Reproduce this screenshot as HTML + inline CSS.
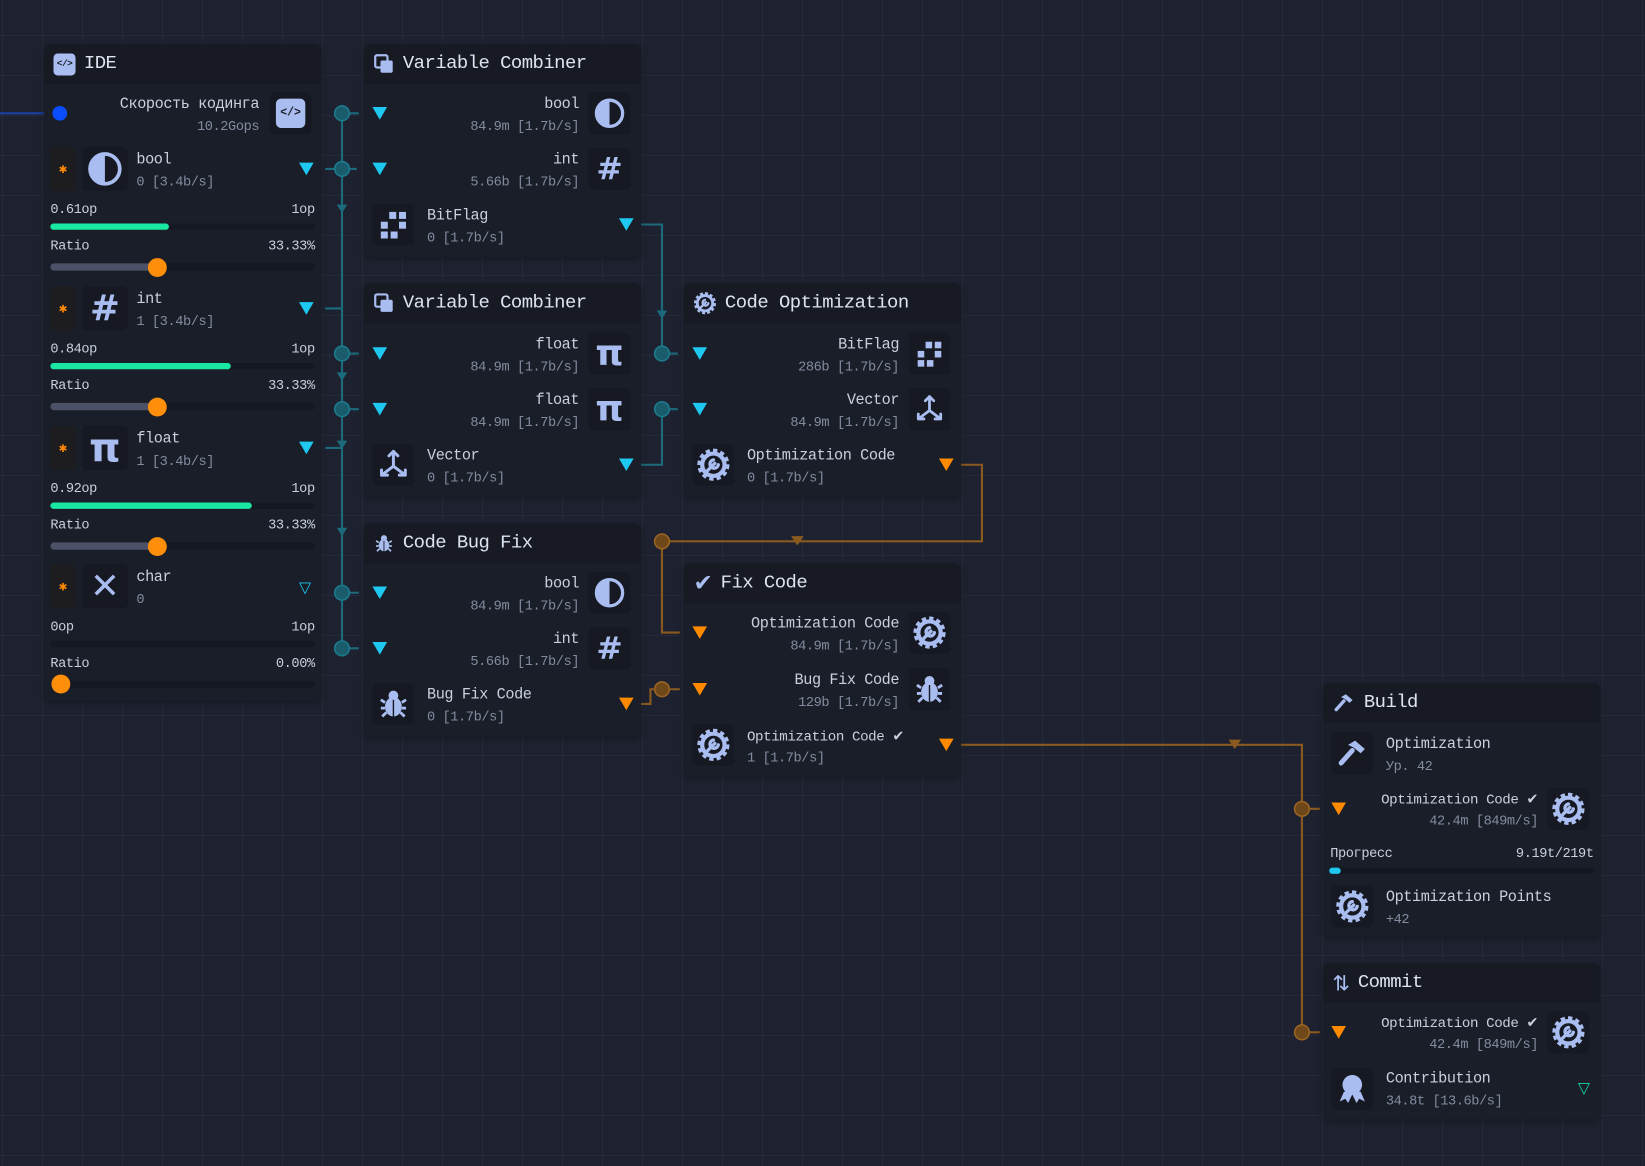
<!DOCTYPE html>
<html><head><meta charset="utf-8"><style>
html,body{margin:0;padding:0;width:1645px;height:1166px;overflow:hidden;background:#1e2230;}
body{background-color:#1e2230;background-image:linear-gradient(#252a38 1px,transparent 1px),linear-gradient(90deg,#252a38 1px,transparent 1px);background-size:40px 40px;background-position:2px -5px;}
#w{position:absolute;left:0;top:0;width:1568px;height:1111px;transform:scale(1.0491);transform-origin:0 0;font-family:"Liberation Mono","DejaVu Sans Mono",monospace;}
.node{position:absolute;width:264px;background:#1a1e28;border-radius:6px;box-shadow:0 2px 6px rgba(0,0,0,.3);}
.hdr{height:38px;background:#171a23;border-radius:6px 6px 0 0;display:flex;align-items:center;padding-left:9px;font-size:18px;color:#dde3f0;letter-spacing:-0.5px;}
.hdr svg{margin-right:8px}
.l{position:absolute;font-size:14.5px;color:#c9cfde;white-space:nowrap;line-height:16px;letter-spacing:-0.4px}
.s{position:absolute;font-size:13px;color:#838b9f;white-space:nowrap;line-height:16px;letter-spacing:-0.4px}
.r{text-align:right;right:59px}
.ib{position:absolute;width:40px;height:40px;background:#161922;border-radius:5px;display:flex;align-items:center;justify-content:center;color:#a9bdf0}
.tc{position:absolute;width:0;height:0;border-left:7px solid transparent;border-right:7px solid transparent;border-top:12px solid #1ec8f0}
.to{position:absolute;width:0;height:0;border-left:7px solid transparent;border-right:7px solid transparent;border-top:12px solid #ff8a00}
.big{font-size:34px;color:#a9bdf0;font-family:"DejaVu Sans",sans-serif;font-weight:bold}
.gb{position:absolute;left:6px;width:24px;height:42px;background:#1d1d20;border-radius:4px;color:#ff8a00;font-size:13px;display:flex;align-items:center;justify-content:center}
.bar{position:absolute;left:6px;width:252px;height:6px;background:#151821;border-radius:3px}
.bar i{position:absolute;left:0;top:0;height:6px;border-radius:3px;background:#19e8a2}
.trk{position:absolute;left:6px;width:252px;height:7px;background:#151821;border-radius:4px}
.trk i{position:absolute;left:0;top:0;height:7px;border-radius:4px;background:#4b5268}
.knob{position:absolute;width:18px;height:18px;border-radius:50%;background:#ff8e0a}
</style></head><body><div id="w">
<svg width="0" height="0" style="position:absolute">
<defs>
<symbol id="gear" viewBox="0 0 24 24"><circle cx="12" cy="12" r="8" fill="none" stroke="currentColor" stroke-width="3"/><circle cx="12" cy="12" r="10" fill="none" stroke="currentColor" stroke-width="3" stroke-dasharray="3 2.2"/><path d="M8 16 L13 11 M12 8.5 a3 3 0 1 0 3.5 3.5" fill="none" stroke="currentColor" stroke-width="2.4" stroke-linecap="round"/></symbol>
<symbol id="bug" viewBox="0 0 24 24"><ellipse cx="12" cy="14" rx="6" ry="7" fill="currentColor"/><circle cx="12" cy="6" r="3.5" fill="currentColor"/><path d="M3 9 L6 11 M3 15 H6 M4 21 L7 18 M21 9 L18 11 M21 15 H18 M20 21 L17 18" stroke="currentColor" stroke-width="2" fill="none"/><path d="M12 9 V21" stroke="#161922" stroke-width="1"/></symbol>
<symbol id="vec" viewBox="0 0 24 24"><path d="M12 3 V13 L4 19 M12 13 L20 19 M9 6 L12 3 L15 6 M4 15.5 V19 H8 M20 15.5 V19 H16" fill="none" stroke="currentColor" stroke-width="2" stroke-linecap="round" stroke-linejoin="round"/></symbol>
<symbol id="bits" viewBox="0 0 24 24"><g fill="currentColor"><rect x="9" y="3" width="5" height="5"/><rect x="16" y="3" width="5" height="5"/><rect x="3" y="10" width="5" height="5"/><rect x="16" y="10" width="5" height="5"/><rect x="3" y="17" width="5" height="5"/><rect x="10" y="17" width="5" height="5"/></g></symbol>
<symbol id="half" viewBox="0 0 24 24"><circle cx="12" cy="12" r="10" fill="none" stroke="currentColor" stroke-width="2.5"/><path d="M12 2 a10 10 0 0 0 0 20z" fill="currentColor"/></symbol>
<symbol id="ham" viewBox="0 0 24 24"><path d="M9 6 L14 3 L21 9 L18 12 L13 8 Z" fill="currentColor"/><path d="M12 10 L4 19" stroke="currentColor" stroke-width="3.5" stroke-linecap="round"/></symbol>
<symbol id="copy" viewBox="0 0 24 24"><rect x="2" y="2" width="14" height="14" rx="2" fill="none" stroke="currentColor" stroke-width="2.5"/><rect x="8" y="8" width="14" height="14" rx="2" fill="currentColor"/></symbol>
</defs></svg>

<svg style="position:absolute;left:0;top:0" width="1568" height="1111">
<g stroke="#1b6b7c" stroke-width="2" fill="none">
<path d="M326 100 V620"/><path d="M310 161 H340 M310 294 H326 M310 427 H326 M326 108 H342 M326 337 H342 M326 390 H342 M326 565 H342 M326 618 H342"/>
<path d="M607 214 H631 V337 M631 337 H646 M631 390 H646 M607 443 H631 V390"/>
</g>
<g fill="#1b6b7c"><path d="M321 195 l5 8 l5 -8z M321 355 l5 8 l5 -8z M321 420 l5 8 l5 -8z M321 503 l5 8 l5 -8z M626 296 l5 8 l5 -8z"/></g>
<g fill="#1b5c6c" stroke="#1b7a8c" stroke-width="1.5"><circle cx="326" cy="108" r="7"/><circle cx="326" cy="161" r="7"/><circle cx="326" cy="337" r="7"/><circle cx="326" cy="390" r="7"/><circle cx="326" cy="565" r="7"/><circle cx="326" cy="618" r="7"/><circle cx="631" cy="337" r="7"/><circle cx="631" cy="390" r="7"/></g>
<path d="M0 108 H42" stroke="#1a40a0" stroke-width="2"/>
<g stroke="#8a5a1f" stroke-width="2" fill="none">
<path d="M916 443 H936 V516 H631 V603 H648 M607 671 H620 V657 H648 M916 710 H1241 V984 H1258 M1241 771 H1258"/>
</g>
<g fill="#8a5a1f"><path d="M754 511 l6 9 l6 -9z M1171 705 l6 9 l6 -9z"/></g>
<g fill="#6e4818" stroke="#9a6424" stroke-width="1.5"><circle cx="631" cy="516" r="7"/><circle cx="631" cy="657" r="7"/><circle cx="1241" cy="771" r="7"/><circle cx="1241" cy="984" r="7"/></g>
</svg>

<div class="node" style="left:42px;top:42px;height:626px">
<div class="hdr"><span style="display:inline-flex;width:21px;height:21px;background:#a9bdf0;border-radius:4px;color:#1a1e28;font-size:9px;align-items:center;justify-content:center;margin-right:8px;font-weight:bold">&lt;/&gt;</span>IDE</div>
<div style="position:absolute;left:8px;top:59px;width:14px;height:14px;border-radius:50%;background:#0a4cff"></div>
<div class="l r" style="top:50px">Скорость кодинга</div><div class="s r" style="top:71px">10.2Gops</div>
<div class="ib" style="left:215px;top:46px;width:40px"><span style="display:inline-flex;width:28px;height:28px;background:#a9bdf0;border-radius:5px;color:#1a1e28;font-size:11px;align-items:center;justify-content:center;font-weight:bold">&lt;/&gt;</span></div>

<div class="gb" style="top:98px">✱</div><div class="ib" style="left:36px;top:98px;width:44px;height:42px"><svg width="34" height="34"><use href="#half"/></svg></div>
<div class="l" style="left:88px;top:103px">bool</div><div class="s" style="left:88px;top:124px">0 [3.4b/s]</div><div class="tc" style="left:243px;top:113px"></div>
<div class="s" style="left:6px;top:150px;color:#c8cedd">0.61op</div><div class="s" style="right:6px;top:150px;color:#c8cedd">1op</div>
<div class="bar" style="top:171px"><i style="width:113px"></i></div>
<div class="s" style="left:6px;top:185px;color:#c8cedd">Ratio</div><div class="s" style="right:6px;top:185px;color:#c8cedd">33.33%</div>
<div class="trk" style="top:209px"><i style="width:102px"></i></div><div class="knob" style="left:99px;top:204px"></div>

<div class="gb" style="top:231px">✱</div><div class="ib" style="left:36px;top:231px;width:44px;height:42px"><span class="big">#</span></div>
<div class="l" style="left:88px;top:236px">int</div><div class="s" style="left:88px;top:257px">1 [3.4b/s]</div><div class="tc" style="left:243px;top:246px"></div>
<div class="s" style="left:6px;top:283px;color:#c8cedd">0.84op</div><div class="s" style="right:6px;top:283px;color:#c8cedd">1op</div>
<div class="bar" style="top:304px"><i style="width:172px"></i></div>
<div class="s" style="left:6px;top:318px;color:#c8cedd">Ratio</div><div class="s" style="right:6px;top:318px;color:#c8cedd">33.33%</div>
<div class="trk" style="top:342px"><i style="width:102px"></i></div><div class="knob" style="left:99px;top:337px"></div>

<div class="gb" style="top:364px">✱</div><div class="ib" style="left:36px;top:364px;width:44px;height:42px"><span class="big" style="font-size:38px">π</span></div>
<div class="l" style="left:88px;top:369px">float</div><div class="s" style="left:88px;top:390px">1 [3.4b/s]</div><div class="tc" style="left:243px;top:379px"></div>
<div class="s" style="left:6px;top:416px;color:#c8cedd">0.92op</div><div class="s" style="right:6px;top:416px;color:#c8cedd">1op</div>
<div class="bar" style="top:437px"><i style="width:192px"></i></div>
<div class="s" style="left:6px;top:451px;color:#c8cedd">Ratio</div><div class="s" style="right:6px;top:451px;color:#c8cedd">33.33%</div>
<div class="trk" style="top:475px"><i style="width:102px"></i></div><div class="knob" style="left:99px;top:470px"></div>

<div class="gb" style="top:496px">✱</div><div class="ib" style="left:36px;top:496px;width:44px;height:42px"><span class="big" style="font-size:34px">✕</span></div>
<div class="l" style="left:88px;top:501px">char</div><div class="s" style="left:88px;top:522px">0</div>
<div style="position:absolute;left:243px;top:511px;color:#1ec8f0;font-size:15px;line-height:14px;font-family:'DejaVu Sans',sans-serif">▽</div>
<div class="s" style="left:6px;top:548px;color:#c8cedd">0op</div><div class="s" style="right:6px;top:548px;color:#c8cedd">1op</div>
<div class="bar" style="top:569px"></div>
<div class="s" style="left:6px;top:583px;color:#c8cedd">Ratio</div><div class="s" style="right:6px;top:583px;color:#c8cedd">0.00%</div>
<div class="trk" style="top:607px"></div><div class="knob" style="left:7px;top:601px"></div>
</div>

<div class="node" style="left:347px;top:42px;height:203px">
<div class="hdr"><svg width="20" height="20" style="color:#a9bdf0"><use href="#copy"/></svg>Variable Combiner</div>
<div class="tc" style="left:8px;top:60px"></div><div class="l r" style="top:50px">bool</div><div class="s r" style="top:71px">84.9m [1.7b/s]</div><div class="ib" style="left:214px;top:46px"><svg width="30" height="30"><use href="#half"/></svg></div>
<div class="tc" style="left:8px;top:113px"></div><div class="l r" style="top:103px">int</div><div class="s r" style="top:124px">5.66b [1.7b/s]</div><div class="ib" style="left:214px;top:99px"><span class="big" style="font-size:30px">#</span></div>
<div class="ib" style="left:8px;top:152px"><svg width="32" height="32"><use href="#bits"/></svg></div><div class="l" style="left:60px;top:156px">BitFlag</div><div class="s" style="left:60px;top:177px">0 [1.7b/s]</div><div class="tc" style="left:243px;top:166px"></div>
</div>

<div class="node" style="left:347px;top:270px;height:203px">
<div class="hdr"><svg width="20" height="20" style="color:#a9bdf0"><use href="#copy"/></svg>Variable Combiner</div>
<div class="tc" style="left:8px;top:61px"></div><div class="l r" style="top:51px">float</div><div class="s r" style="top:72px">84.9m [1.7b/s]</div><div class="ib" style="left:214px;top:47px"><span class="big" style="font-size:34px">π</span></div>
<div class="tc" style="left:8px;top:114px"></div><div class="l r" style="top:104px">float</div><div class="s r" style="top:125px">84.9m [1.7b/s]</div><div class="ib" style="left:214px;top:100px"><span class="big" style="font-size:34px">π</span></div>
<div class="ib" style="left:8px;top:153px"><svg width="34" height="34"><use href="#vec"/></svg></div><div class="l" style="left:60px;top:157px">Vector</div><div class="s" style="left:60px;top:178px">0 [1.7b/s]</div><div class="tc" style="left:243px;top:167px"></div>
</div>

<div class="node" style="left:347px;top:499px;height:203px">
<div class="hdr"><svg width="20" height="20" style="color:#a9bdf0"><use href="#bug"/></svg>Code Bug Fix</div>
<div class="tc" style="left:8px;top:60px"></div><div class="l r" style="top:50px">bool</div><div class="s r" style="top:71px">84.9m [1.7b/s]</div><div class="ib" style="left:214px;top:46px"><svg width="30" height="30"><use href="#half"/></svg></div>
<div class="tc" style="left:8px;top:113px"></div><div class="l r" style="top:103px">int</div><div class="s r" style="top:124px">5.66b [1.7b/s]</div><div class="ib" style="left:214px;top:99px"><span class="big" style="font-size:30px">#</span></div>
<div class="ib" style="left:8px;top:152px"><svg width="32" height="32"><use href="#bug"/></svg></div><div class="l" style="left:60px;top:156px">Bug Fix Code</div><div class="s" style="left:60px;top:177px">0 [1.7b/s]</div><div class="to" style="left:243px;top:166px"></div>
</div>

<div class="node" style="left:652px;top:270px;height:203px">
<div class="hdr"><svg width="22" height="22" style="color:#a9bdf0"><use href="#gear"/></svg>Code Optimization</div>
<div class="tc" style="left:8px;top:61px"></div><div class="l r" style="top:51px">BitFlag</div><div class="s r" style="top:72px">286b [1.7b/s]</div><div class="ib" style="left:214px;top:47px"><svg width="30" height="30"><use href="#bits"/></svg></div>
<div class="tc" style="left:8px;top:114px"></div><div class="l r" style="top:104px">Vector</div><div class="s r" style="top:125px">84.9m [1.7b/s]</div><div class="ib" style="left:214px;top:100px"><svg width="32" height="32"><use href="#vec"/></svg></div>
<div class="ib" style="left:8px;top:153px"><svg width="32" height="32"><use href="#gear"/></svg></div><div class="l" style="left:60px;top:157px">Optimization Code</div><div class="s" style="left:60px;top:178px">0 [1.7b/s]</div><div class="to" style="left:243px;top:167px"></div>
</div>

<div class="node" style="left:652px;top:537px;height:203px">
<div class="hdr"><span style="color:#a9bdf0;font-size:22px;margin-right:8px;font-family:'DejaVu Sans',sans-serif">✔</span>Fix Code</div>
<div class="to" style="left:8px;top:60px"></div><div class="l r" style="top:50px">Optimization Code</div><div class="s r" style="top:71px">84.9m [1.7b/s]</div><div class="ib" style="left:214px;top:46px"><svg width="32" height="32"><use href="#gear"/></svg></div>
<div class="to" style="left:8px;top:114px"></div><div class="l r" style="top:104px">Bug Fix Code</div><div class="s r" style="top:125px">129b [1.7b/s]</div><div class="ib" style="left:214px;top:100px"><svg width="32" height="32"><use href="#bug"/></svg></div>
<div class="ib" style="left:8px;top:153px"><svg width="32" height="32"><use href="#gear"/></svg></div><div class="l" style="left:60px;top:157px;font-size:13.5px">Optimization Code <span style="font-family:'DejaVu Sans',sans-serif">✔</span></div><div class="s" style="left:60px;top:178px">1 [1.7b/s]</div><div class="to" style="left:243px;top:167px"></div>
</div>

<div class="node" style="left:1261px;top:651px;height:242px">
<div class="hdr"><svg width="22" height="22" style="color:#a9bdf0"><use href="#ham"/></svg>Build</div>
<div class="ib" style="left:8px;top:47px"><svg width="32" height="32"><use href="#ham"/></svg></div><div class="l" style="left:60px;top:51px">Optimization</div><div class="s" style="left:60px;top:72px">Ур. 42</div>
<div class="to" style="left:8px;top:114px"></div><div class="l r" style="top:103px;font-size:13.5px">Optimization Code <span style="font-family:'DejaVu Sans',sans-serif">✔</span></div><div class="s r" style="top:124px">42.4m [849m/s]</div><div class="ib" style="left:214px;top:100px"><svg width="32" height="32"><use href="#gear"/></svg></div>
<div class="s" style="left:7px;top:155px;color:#c8cedd">Прогресс</div><div class="s" style="right:6px;top:155px;color:#c8cedd">9.19t/219t</div>
<div class="bar" style="top:176px"><i style="width:11px;background:#1ec8f0"></i></div>
<div class="ib" style="left:8px;top:193px"><svg width="32" height="32"><use href="#gear"/></svg></div><div class="l" style="left:60px;top:197px">Optimization Points</div><div class="s" style="left:60px;top:218px">+42</div>
</div>

<div class="node" style="left:1261px;top:918px;height:149px">
<div class="hdr"><span style="color:#a9bdf0;font-size:20px;margin-right:8px;font-family:'DejaVu Sans',sans-serif">⇅</span>Commit</div>
<div class="to" style="left:8px;top:60px"></div><div class="l r" style="top:49px;font-size:13.5px">Optimization Code <span style="font-family:'DejaVu Sans',sans-serif">✔</span></div><div class="s r" style="top:70px">42.4m [849m/s]</div><div class="ib" style="left:214px;top:46px"><svg width="32" height="32"><use href="#gear"/></svg></div>
<div class="ib" style="left:8px;top:100px"><svg width="32" height="32" viewBox="0 0 24 24" style="color:#a9bdf0"><circle cx="12" cy="9" r="7" fill="currentColor"/><path d="M6 14 L3 21 L7 19 L9 22 L12 16 L15 22 L17 19 L21 21 L18 14" fill="currentColor"/></svg></div><div class="l" style="left:60px;top:103px">Contribution</div><div class="s" style="left:60px;top:124px">34.8t [13.6b/s]</div>
<div style="position:absolute;left:243px;top:112px;color:#19d89a;font-size:15px;line-height:14px;font-family:'DejaVu Sans',sans-serif">▽</div>
</div>
</div></body></html>
